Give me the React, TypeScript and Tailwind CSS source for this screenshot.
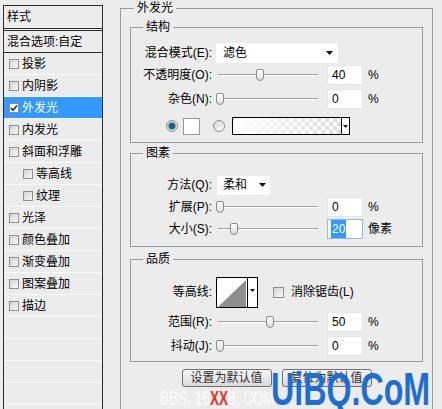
const FONT = "font-['Liberation_Sans','Noto_Sans_CJK_SC',sans-serif]";

const styles = [
  { label: '投影' },
  { label: '内阴影' },
  { label: '外发光', checked: true, active: true },
  { label: '内发光' },
  { label: '斜面和浮雕' },
  { label: '等高线', sub: true },
  { label: '纹理', sub: true },
  { label: '光泽' },
  { label: '颜色叠加' },
  { label: '渐变叠加' },
  { label: '图案叠加' },
  { label: '描边' },
  { label: '' },
  { label: '' },
  { label: '' },
  { label: '' },
]

function Check({ checked, size = 10 }: { checked?: boolean; size?: number }) {
  return (
    <span
      className={
        'shrink-0 border border-[#8f8f8f] flex items-center justify-center ' +
        (checked ? 'bg-white' : 'bg-gradient-to-br from-[#d2d2d2] to-[#fafafa]')
      }
      style={{ width: size, height: size }}
    >
      {checked && (
        <svg width="8" height="8" viewBox="0 0 8 8">
          <path d="M1 4 L3 6.2 L7 1.5" fill="none" stroke="#1b2a44" strokeWidth="1.6" />
        </svg>
      )}
    </span>
  )
}

function Radio({ on }: { on?: boolean }) {
  return (
    <span className="w-[12px] h-[12px] rounded-full border border-[#8a8a8a] bg-gradient-to-br from-[#d8d8d8] to-white flex items-center justify-center shrink-0">
      {on && <span className="w-[6px] h-[6px] rounded-full bg-[#1c5f7e] ring-1 ring-[#6aa6c4]" />}
    </span>
  )
}

function Tri() {
  return (
    <svg width="7" height="4" viewBox="0 0 7 4">
      <path d="M0 0 H7 L3.5 4 Z" fill="#111" />
    </svg>
  )
}

function Slider({ pos }: { pos: number }) {
  return (
    <div className="relative w-[102px] h-[14px] ml-[4px] shrink-0">
      <div className="absolute left-[2px] right-0 top-[6px] h-[2px] border-t border-[#a2a2a2] border-b border-b-white" />
      <div
        className="absolute top-[1px] w-[8px] h-[12px] rounded-b-[4px] rounded-t-[2px] border border-[#8a8a8a] bg-gradient-to-b from-white to-[#dcdcdc]"
        style={{ left: pos }}
      />
    </div>
  )
}

function NumBox({ value, selected }: { value: string; selected?: boolean }) {
  return (
    <div
      className={
        'ml-[9px] w-[36px] h-[20px] bg-white flex items-center pl-[3px] text-[12px] ' +
        (selected ? 'border border-[#8fbbe8]' : 'border border-[#e6e6e6]')
      }
    >
      <span className={selected ? 'bg-[#3399ff] text-white px-[1px]' : 'px-[1px]'}>{value}</span>
    </div>
  )
}

function Label({ children }: { children: React.ReactNode }) {
  return <span className="w-[81px] text-right shrink-0 whitespace-nowrap">{children}</span>
}

function SliderRow({ label, pos, value, unit = '%', selected }: { label: string; pos: number; value: string; unit?: string; selected?: boolean }) {
  return (
    <div className="flex items-center h-[22px]">
      <Label>{label}</Label>
      <Slider pos={pos} />
      <NumBox value={value} selected={selected} />
      <span className="ml-[5px]">{unit}</span>
    </div>
  )
}

function Group({ title, className, children }: { title: string; className?: string; children: React.ReactNode }) {
  return (
    <fieldset className={'border border-[#9b9b9b] ' + (className ?? '')}>
      <legend className="ml-[12px] px-[3px] leading-[16px]">{title}</legend>
      {children}
    </fieldset>
  )
}

export default function App() {
  return (
    <div className={'relative w-[442px] h-[409px] overflow-hidden bg-[#ececec] text-[12px] text-black flex ' + FONT}>
      {/* left: style list */}
      <div className="ml-[3px] mt-[5px] w-[100px] h-[420px] border border-[#2e2e2e] shrink-0">
        <div className="h-[25px] flex items-center pl-[3px] border-b-[3px] border-double border-[#2e2e2e]">样式</div>
        <div className="h-[22px] flex items-center pl-[3px] border-b border-[#2e2e2e]">混合选项:自定</div>
        {styles.map((s, i) => (
          <div
            key={i}
            className={
              'h-[22px] flex items-center gap-[3px] border-b border-[#fafafa] ' +
              (s.sub ? 'pl-[19px] ' : 'pl-[5px] ') +
              (s.active ? 'bg-[#3399ff] text-white' : '')
            }
          >
            {s.label && <Check checked={s.checked} />}
            <span>{s.label}</span>
          </div>
        ))}
      </div>

      {/* right: outer glow settings */}
      <fieldset className="ml-[17px] w-[313px] h-[440px] border border-[#9b9b9b] px-[9px] pt-[3px] shrink-0">
        <legend className="ml-[4px] px-[3px] leading-[16px]">外发光</legend>

        <Group title="结构" className="pt-[7px] pb-[5px]">
          <div className="flex items-center h-[22px]">
            <Label>混合模式(E):</Label>
            <div className="ml-[4px] w-[122px] h-[20px] bg-white flex items-center justify-between pl-[7px] pr-[5px]">
              <span>滤色</span>
              <Tri />
            </div>
          </div>
          <SliderRow label="不透明度(O):" pos={40} value="40" />
          <div className="mt-[2px]">
            <SliderRow label="杂色(N):" pos={0} value="0" />
          </div>
          <div className="flex items-center h-[22px] mt-[5px] pl-[35px]">
            <Radio on />
            <span className="ml-[5px] w-[17px] h-[17px] bg-white border border-[#9a9a9a]" />
            <span className="ml-[13px]">
              <Radio />
            </span>
            <div className="ml-[7px] w-[118px] h-[18px] border border-black flex">
              <div className="flex-1 bg-[image:linear-gradient(to_right,#ffffff,rgba(255,255,255,0)),repeating-conic-gradient(#dcdcdc_0%_25%,#ffffff_0%_50%)] bg-[length:100%_100%,8px_8px]" />
              <div className="w-[8px] border-l border-black bg-white flex items-center justify-center">
                <svg width="5" height="3" viewBox="0 0 5 3">
                  <path d="M0 0 H5 L2.5 3 Z" fill="#111" />
                </svg>
              </div>
            </div>
          </div>
        </Group>

        <Group title="图素" className="mt-[2px] pt-[13px] pb-[6px]">
          <div className="flex items-center h-[22px]">
            <Label>方法(Q):</Label>
            <div className="ml-[5px] w-[53px] h-[19px] bg-white flex items-center justify-between pl-[6px] pr-[4px]">
              <span>柔和</span>
              <Tri />
            </div>
          </div>
          <SliderRow label="扩展(P):" pos={0} value="0" />
          <SliderRow label="大小(S):" pos={14} value="20" unit="像素" selected />
        </Group>

        <Group title="品质" className="mt-[4px] pt-[9px] pb-[4px]">
          <div className="flex items-center h-[32px]">
            <Label>等高线:</Label>
            <div className="ml-[4px] h-[31px] flex border border-black">
              <svg width="30" height="29" viewBox="0 0 30 29" className="bg-white">
                <path d="M2 28 L29 2 L29 29 L2 29 Z" fill="#8e8e8e" />
              </svg>
              <div className="w-[10px] border-l border-black bg-white flex justify-center pt-[11px]">
                <svg width="5" height="3" viewBox="0 0 5 3">
                  <path d="M0 0 H5 L2.5 3 Z" fill="#111" />
                </svg>
              </div>
            </div>
            <span className="ml-[15px]">
              <Check size={11} />
            </span>
            <span className="ml-[7px]">消除锯齿(L)</span>
          </div>
          <div className="mt-[3px]">
            <SliderRow label="范围(R):" pos={50} value="50" />
          </div>
          <div className="mt-[2px]">
            <SliderRow label="抖动(J):" pos={0} value="0" />
          </div>
        </Group>

        <div className="mt-[7px] flex justify-center gap-[10px]">
          <button className="w-[90px] h-[18px] rounded-[3px] border border-[#707070] bg-gradient-to-b from-[#f7f7f7] to-[#dadada] text-[12px] leading-none text-[#333]">
            设置为默认值
          </button>
          <button className="w-[90px] h-[18px] rounded-[3px] border border-[#707070] bg-gradient-to-b from-[#f7f7f7] to-[#dadada] text-[12px] leading-none text-[#333]">
            复位为默认值
          </button>
        </div>
      </fieldset>

      {/* watermarks over the buttons */}
      <div className="absolute left-[160px] top-[388px] origin-left scale-x-[0.68] whitespace-nowrap text-[20px] leading-[20px] font-['Liberation_Sans',sans-serif] text-white/80">
        BBS. 16<span className="text-[#e3342b] font-bold">XX</span>8. COM
      </div>
      <div className="absolute left-[271px] top-[366px] origin-left scale-x-[0.7] whitespace-nowrap text-[46px] leading-[46px] font-bold font-['Liberation_Sans',sans-serif] text-[#1e6ed0]">
        UiBQ.CoM
      </div>
    </div>
  )
}
